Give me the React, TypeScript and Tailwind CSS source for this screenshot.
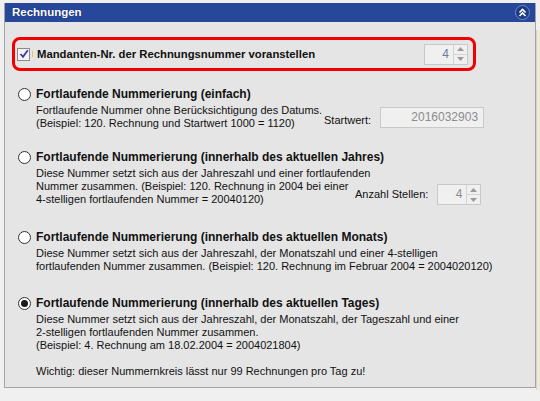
import React from "react";

const ui = { fontFamily: '"Liberation Sans", Arial, sans-serif' };

const Spinner: React.FC<{ value: string; tint?: string }> = ({ value, tint = "text-[#8c8c8c]" }) => (
  <div className="flex h-[21px] w-[44px] shrink-0 border border-[#c9c9c9] bg-[#f0f0f0]">
    <div className={`flex flex-1 items-center justify-end pr-[4px] text-[12px] ${tint}`}>{value}</div>
    <div className="flex w-[14px] flex-col border-l border-[#d4d4d4]">
      <div className="flex flex-1 items-center justify-center border-b border-[#d4d4d4]">
        <svg width="7" height="4" viewBox="0 0 7 4">
          <path d="M0 4 L3.5 0 L7 4 Z" fill="#9a9a9a" />
        </svg>
      </div>
      <div className="flex flex-1 items-center justify-center">
        <svg width="7" height="4" viewBox="0 0 7 4">
          <path d="M0 0 L3.5 4 L7 0 Z" fill="#9a9a9a" />
        </svg>
      </div>
    </div>
  </div>
);

const Radio: React.FC<{ checked?: boolean }> = ({ checked }) => (
  <div className="flex h-[13px] w-[13px] shrink-0 items-center justify-center rounded-full border border-[#333] bg-white">
    {checked && <div className="h-[7px] w-[7px] rounded-full bg-[#1a1a1a]" />}
  </div>
);

const Option: React.FC<{
  title: string;
  checked?: boolean;
  children: React.ReactNode;
  className?: string;
}> = ({ title, checked, children, className = "" }) => (
  <div className={`pl-[13px] ${className}`}>
    <div className="flex h-[16px] items-center gap-[5px]">
      <Radio checked={checked} />
      <span className="text-[12px] font-bold text-[#111]">{title}</span>
    </div>
    <div className="whitespace-nowrap pl-[18px] pt-[2px] text-[11px] leading-[13px] text-[#111]">{children}</div>
  </div>
);

export default function App() {
  return (
    <div className="flex h-[401px] w-[540px] items-start bg-[#f0f0f0] pt-[3px] pl-[4px]" style={ui}>
      <div className="h-[385px] w-[532px] shrink-0 border border-t-0 border-[#a3a3a3] bg-[#e5e5e5]">
        {/* title bar */}
        <div className="flex h-[19px] items-center justify-between bg-[#27479a] pl-[7px] pr-[5px]">
          <span className="text-[11.5px] font-bold text-white [text-shadow:0_0_1px_#0b1f5a]">Rechnungen</span>
          <div className="flex h-[15px] w-[15px] items-center justify-center rounded-full border border-[#6f8ccc] bg-[#1c3984]">
            <svg width="9" height="9" viewBox="0 0 9 9" fill="none" stroke="white" strokeWidth="1.6">
              <path d="M1.5 4.5 L4.5 1.5 L7.5 4.5" />
              <path d="M1.5 8 L4.5 5 L7.5 8" />
            </svg>
          </div>
        </div>

        {/* highlighted prefix option */}
        <div className="ml-[7px] mt-[15px] flex h-[34px] w-[464px] items-center justify-between rounded-[8px] border-[3px] border-[#f00000] pl-[2px] pr-[5px]">
          <div className="flex items-center">
            <div className="flex h-[13px] w-[13px] items-center justify-center border border-[#8a8a8a] bg-[#f4f4f4]">
              <svg width="10" height="10" viewBox="0 0 10 10" fill="none" stroke="#3a3aa0" strokeWidth="1.8">
                <path d="M1.5 5 L4 7.8 L8.8 1.2" />
              </svg>
            </div>
            <div className="ml-[2px] h-[6px] w-[1px] bg-[#f0c060]" />
            <span className="ml-[4px] text-[11.3px] font-bold text-[#111]">Mandanten-Nr. der Rechnungsnummer voranstellen</span>
          </div>
          <Spinner value="4" tint="text-[#6b78a0]" />
        </div>

        <Option title="Fortlaufende Nummerierung (einfach)" className="mt-[15px]">
          <div className="flex items-start">
            <div className="w-[288px] shrink-0">
              <div>Fortlaufende Nummer ohne Berücksichtigung des Datums.</div>
              <div>(Beispiel: 120. Rechnung und Startwert 1000 = 1120)</div>
            </div>
            <div className="mt-[3px] flex items-center gap-[9px]">
              <span className="mt-[6px]">Startwert:</span>
              <div className="flex h-[21px] w-[104px] items-center justify-end border border-[#c9c9c9] bg-[#f0f0f0] pr-[5px] text-[12px] text-[#8c8c8c]">
                2016032903
              </div>
            </div>
          </div>
        </Option>

        <Option title="Fortlaufende Nummerierung (innerhalb des aktuellen Jahres)" className="mt-[19px]">
          <div className="flex items-start">
            <div className="w-[319px] shrink-0">
              <div>Diese Nummer setzt sich aus der Jahreszahl und einer fortlaufenden</div>
              <div>Nummer zusammen. (Beispiel: 120. Rechnung in 2004 bei einer</div>
              <div>4-stelligen fortlaufenden Nummer = 20040120)</div>
            </div>
            <div className="mt-[17px] flex items-center gap-[9px]">
              <span>Anzahl Stellen:</span>
              <Spinner value="4" />
            </div>
          </div>
        </Option>

        <Option title="Fortlaufende Nummerierung (innerhalb des aktuellen Monats)" className="mt-[23px]">
          <div>Diese Nummer setzt sich aus der Jahreszahl, der Monatszahl und einer 4-stelligen</div>
          <div>fortlaufenden Nummer zusammen. (Beispiel: 120. Rechnung im Februar 2004 = 2004020120)</div>
        </Option>

        <Option title="Fortlaufende Nummerierung (innerhalb des aktuellen Tages)" checked className="mt-[22px]">
          <div>Diese Nummer setzt sich aus der Jahreszahl, der Monatszahl, der Tageszahl und einer</div>
          <div>2-stelligen fortlaufenden Nummer zusammen.</div>
          <div>(Beispiel: 4. Rechnung am 18.02.2004 = 2004021804)</div>
          <div className="mt-[13px]">Wichtig: dieser Nummernkreis lässt nur 99 Rechnungen pro Tag zu!</div>
        </Option>
      </div>
      <div className="flex w-[4px] flex-col">
        <div className="mt-[27px] h-[360px] border-l border-[#d8d4c0] bg-[#ece9d8]" />
      </div>
    </div>
  );
}
